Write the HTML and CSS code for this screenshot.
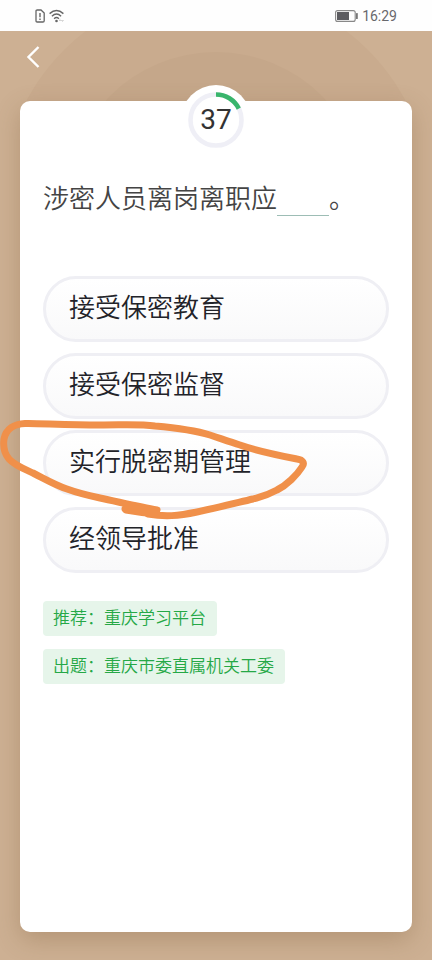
FILE: index.html
```
<!DOCTYPE html>
<html lang="zh-CN">
<head>
  <meta charset="UTF-8">
  <meta name="viewport" content="width=device-width,initial-scale=1">
  <title>答题</title>
  <link rel="stylesheet" href="styles.css">
</head>
<body>
  <div class="status-bar">
    <div class="status-group">
      <svg width="10" height="14" viewBox="0 0 10 14" fill="none" stroke="#666" aria-hidden="true">
        <path d="M1 2.2Q1 1 2.2 1H6L9.2 4V11.8Q9.2 13 8 13H2.2Q1 13 1 11.8Z" stroke-width="1.3"/>
        <path d="M5 4v4.2M5 9.5v1.5" stroke-width="1.4"/>
      </svg>
      <svg width="16" height="14" viewBox="0 0 16 14" fill="none" stroke="#666" aria-hidden="true">
        <path d="M.6 4.600Q7.500-1.400 14.400 4.600M2.900 7.200Q7.500 3 12.100 7.200M5.100 9.700Q7.500 7.500 9.900 9.700" stroke-width="1.400"/>
        <circle cx="7.500" cy="12" r="1.300" fill="#666" stroke="none"/>
        <path d="M10 11.500h4.500M11.500 10.300l-1.500 1.200M13 12.700l1.500-1.200" stroke="#ccc" stroke-width=".8"/>
      </svg>
    </div>
    <div class="status-group battery-group">
      <svg width="23" height="12" viewBox="0 0 23 12" aria-hidden="true">
        <rect x=".6" y=".6" width="19.600" height="10.800" rx="2" fill="none" stroke="#888" stroke-width="1.100"/>
        <rect x="2" y="2" width="12" height="8" fill="#5c5c60"/>
        <rect x="21" y="3" width="1.800" height="6" rx=".6" fill="#777"/>
      </svg>
      <span class="clock">16:29</span>
    </div>
  </div>

  <main class="quiz">
    <svg class="rings" width="432" height="128" viewBox="0 0 432 128" aria-hidden="true">
      <circle cx="216" cy="216" r="215" fill="#c9ab8e"/>
      <circle cx="216" cy="216" r="150" fill="#c5a78a"/>
    </svg>

    <header class="top-nav">
      <button class="back-btn" type="button" aria-label="返回">
        <svg width="14" height="24" viewBox="0 0 14 24" fill="none" stroke="#fff" stroke-width="2.400">
          <path d="M12.500 2L2.500 12L12.500 22"/>
        </svg>
      </button>
    </header>

    <section class="card">
      <div class="counter">
        <svg class="counter-ring" width="56" height="56" viewBox="0 0 56 56" fill="none" stroke-width="4.600" aria-hidden="true">
          <circle cx="28" cy="28" r="25.500" stroke="#efeff6"/>
          <path d="M28 2.500A25.500 25.500 0 0 1 50.800 16.600" stroke="#39b56c"/>
        </svg>
        <span class="counter-num">37</span>
      </div>

      <h1 class="question">涉密人员离岗离职应<span class="blank"></span>。</h1>

      <div class="options">
        <button class="option" type="button">接受保密教育</button>
        <button class="option" type="button">接受保密监督</button>
        <button class="option" type="button">实行脱密期管理</button>
        <button class="option" type="button">经领导批准</button>
      </div>

      <div class="tags">
        <span class="tag">推荐：重庆学习平台</span>
        <span class="tag">出题：重庆市委直属机关工委</span>
      </div>
    </section>

    <!-- hand-drawn circle round the answer -->
    <svg class="scribble" width="312" height="104" viewBox="0 418 312 104" fill="none" stroke="#f0904a" stroke-linecap="round" stroke-linejoin="round" aria-hidden="true">
      <path stroke-width="7" d="M157 510C140 507 119 502 100 498C86 495 78 493 67 489C55 485 45 479 33 473C24 469 14 465 9 459C4 453 3 446 4 439C6 429 14 424 25 423.500C35 423 65 425 100 425C125 425 140 424 155 426C178 428 194 430 210 435C222 439 230 442 240 445C254 450 282 456 297 459C303 460 305 463 302 467C297 475 287 485 277 490C266 496 260 497 253 499C236 503 216 508 197 512C178 516 165 517 148 514"/>
      <path stroke-width="7" d="M125 509C135 508 145 509 156 511M126 510C137 512 145 513 157 514"/>
    </svg>
  </main>
</body>
</html>
```
FILE: styles.css
```
:root {
  --bg: #cdb093;
  --text: #222329;
  --border: #efeff4;
  --green: #25a846;
  --green-bg: #e6f5ea;
}
* { box-sizing: border-box; }
body {
  margin: 0; min-height: 100vh;
  display: flex; flex-direction: column;
  font-family: Roboto, "Noto Sans CJK SC", sans-serif;
  background: var(--bg);
  color: var(--text);
}
.status-bar {
  display: flex; align-items: center; justify-content: space-between;
  height: 31px; padding: 0 35px;
  background: #fefefe;
}
.status-group { display: flex; align-items: center; gap: 4px; }
.clock { font-size: 14px; line-height: 16px; color: #68686c; }

.quiz {
  position: relative; flex: 1;
  display: flex; flex-direction: column;
  padding: 0 20px 28px;
  overflow: hidden;
}
.rings { position: absolute; top: -45px; left: 50%; transform: translateX(-50%); }
.top-nav { position: relative; height: 70px; padding: 14px 0 0 6px; }
.back-btn {
  display: block; padding: 0; border: none;
  background: none; cursor: pointer;
}
.back-btn svg { display: block; }

.card {
  position: relative; flex: 1;
  padding: 78px 23px 24px;
  background: #fff;
  border-radius: 10px;
  box-shadow: 0 8px 24px rgba(120,85,50,0.3);
}
.counter {
  position: absolute; top: -16px; left: 50%;
  width: 70px; height: 70px;
  transform: translateX(-50%);
  display: flex; align-items: center; justify-content: center;
  background: #fff;
  border-radius: 50%;
}
.counter-ring { position: absolute; }
.counter-num { font-size: 28px; line-height: 32px; color: #333; }

.question {
  margin: 0 0 57px;
  font-size: 26px; line-height: 40px; font-weight: 350;
  color: #444;
}
.blank {
  display: inline-block; width: 52px; height: 8px;
  border-bottom: 1px solid #9dbdb5;
  vertical-align: -8px;
}
.options { display: flex; flex-direction: column; gap: 11px; }
.option {
  height: 66px; padding: 0 23px 2px;
  font: inherit; font-size: 26px; line-height: 40px; font-weight: 350;
  text-align: left; color: var(--text);
  background: linear-gradient(#fff, #f9f9fa);
  border: 3px solid var(--border);
  border-radius: 33px;
  cursor: pointer;
}
.tags {
  display: flex; flex-direction: column; align-items: flex-start;
  gap: 13px; margin-top: 28px;
}
.tag {
  padding: 4px 11px 5px 10px;
  font-size: 17px; line-height: 26px; font-weight: 350;
  color: var(--green);
  background: var(--green-bg);
  border-radius: 4px;
}
.scribble {
  position: absolute; top: 387px; left: 0;
  pointer-events: none;
}
```
